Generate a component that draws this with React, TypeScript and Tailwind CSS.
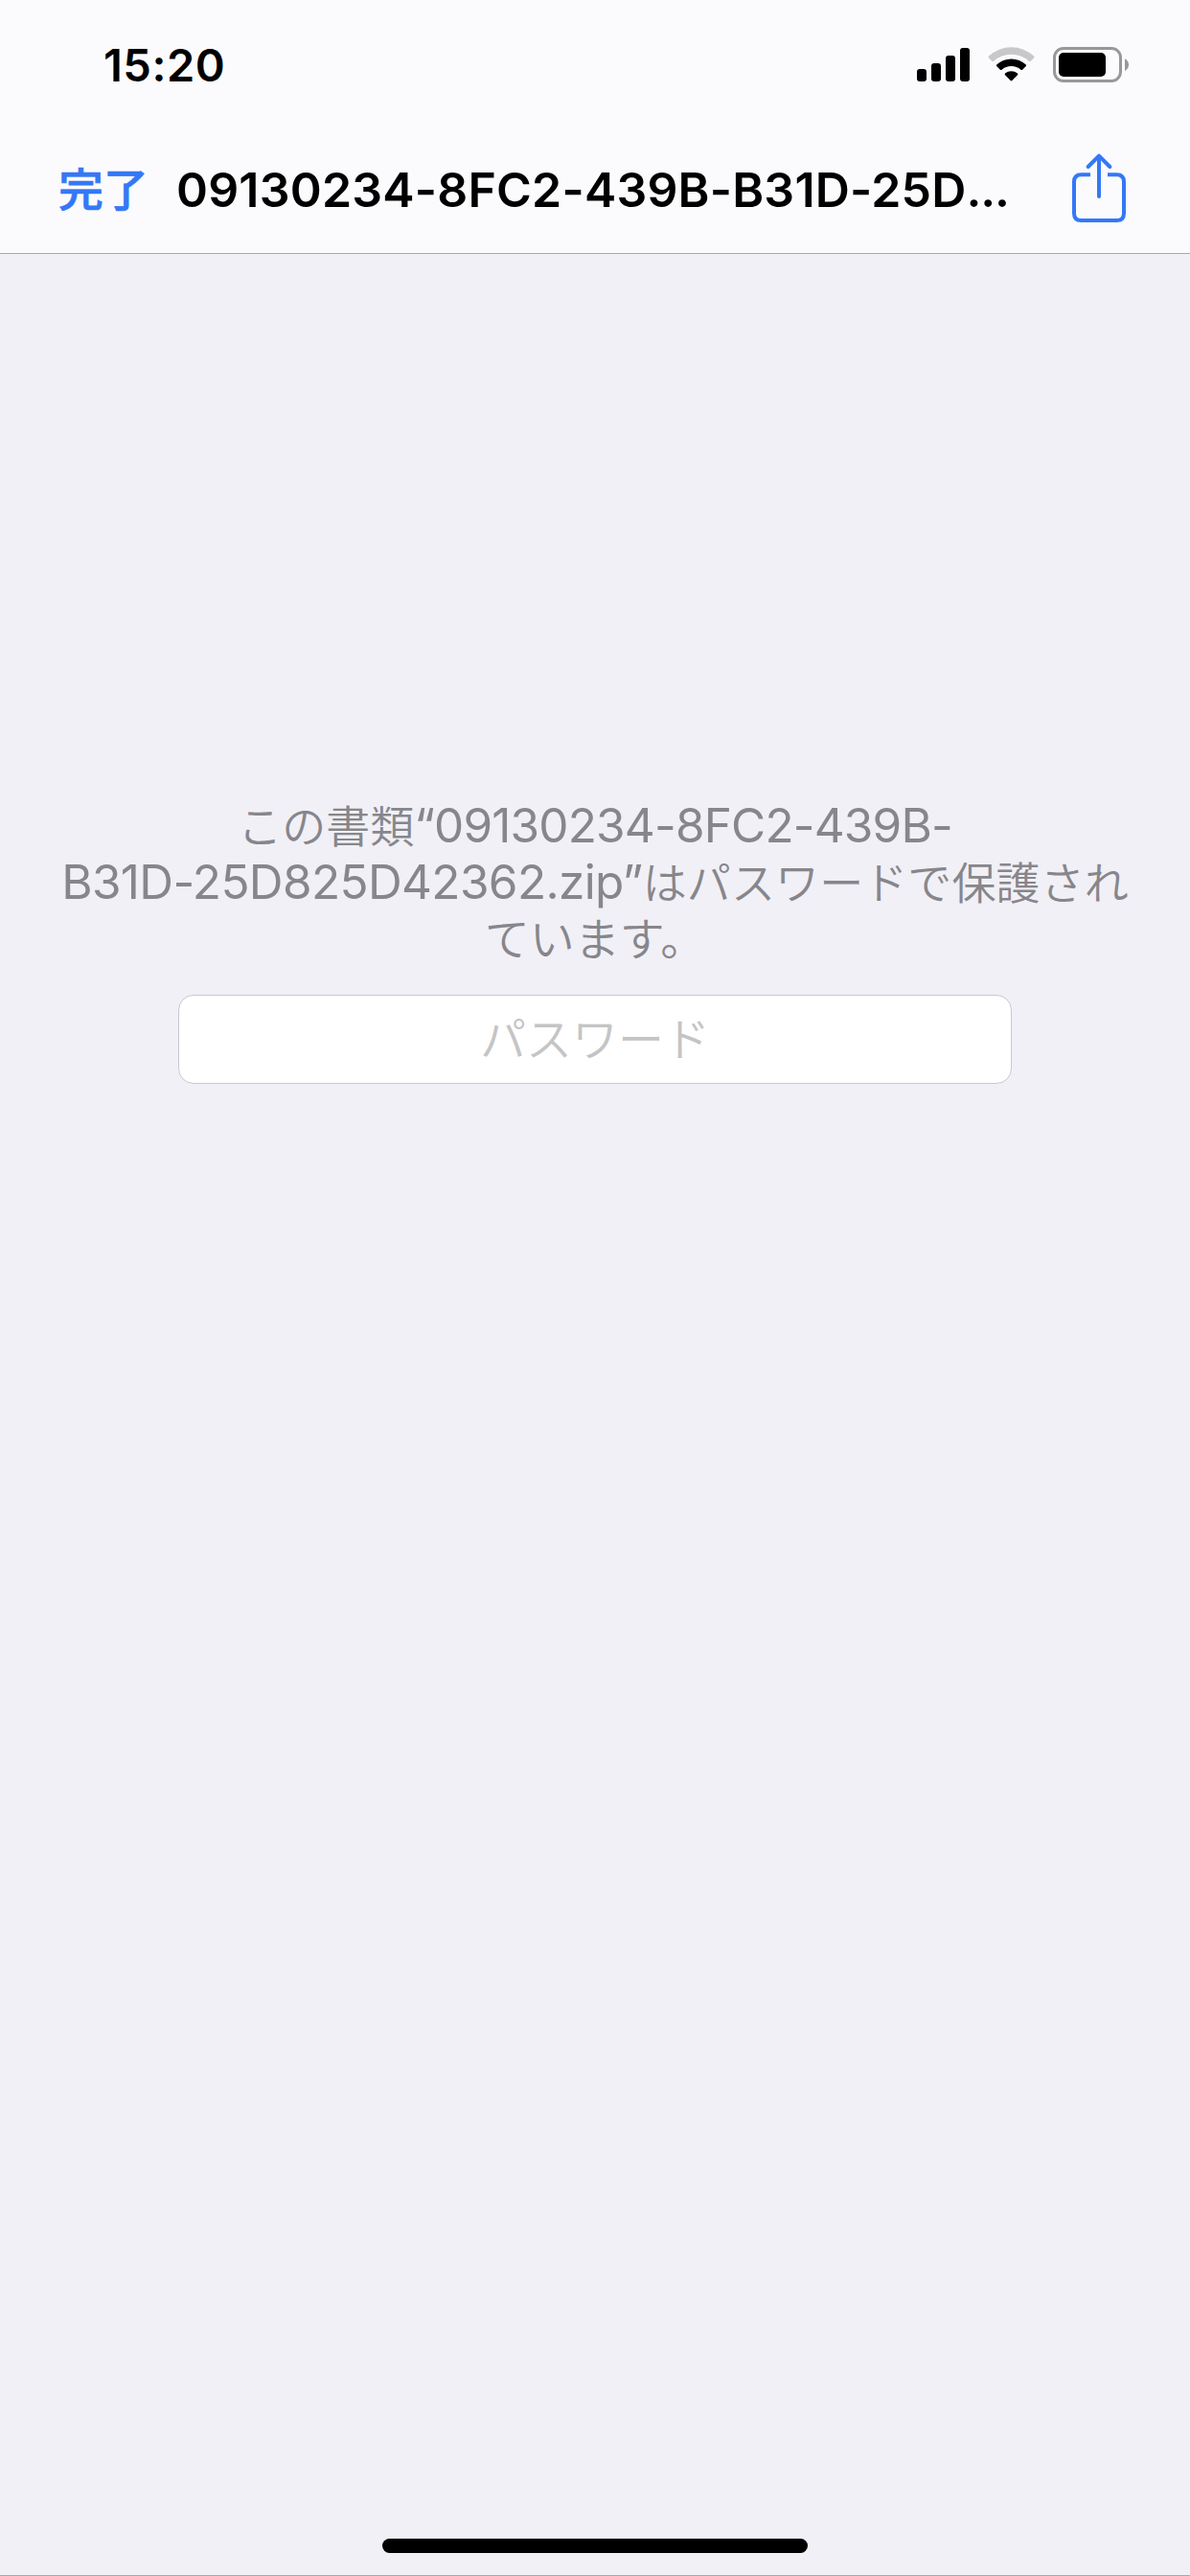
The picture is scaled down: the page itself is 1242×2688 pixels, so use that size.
function SignalIcon() {
  return (
    <svg className="h-[36px] w-[56px]" viewBox="0 0 56 36" fill="#000">
      <rect x="0" y="22" width="10" height="13" rx="3" />
      <rect x="15" y="16" width="10" height="19" rx="3" />
      <rect x="30" y="8" width="10" height="27" rx="3" />
      <rect x="45" y="0" width="10" height="35" rx="3" />
    </svg>
  );
}

function WifiIcon() {
  return (
    <svg className="ml-[18px] h-[38px] w-[49px]" viewBox="0 0 49 38">
      <path
        d="M1 9.6Q.1 10.6 1 11.5L4.2 14.8Q5.2 15.6 6.2 14.8A27.3 27.3 0 0 1 42.8 14.8Q43.8 15.6 44.8 14.8L48 11.5Q48.9 10.6 48 9.6A34.5 34.5 0 0 0 1 9.6Z"
        fill="#c8c8cb"
      />
      <path
        d="M9.2 18.4Q8.5 19.2 9.2 20L12.8 23.7Q13.7 24.4 14.6 23.7A15.4 15.4 0 0 1 34.4 23.7Q35.3 24.4 36.2 23.7L39.8 20Q40.5 19.2 39.8 18.4A22.6 22.6 0 0 0 9.2 18.4Z"
        fill="#000"
      />
      <path
        d="M18 27.6Q17.2 28.5 18 29.3L23.7 35Q24.5 35.8 25.3 35L31 29.3Q31.8 28.5 31 27.6A10.3 10.3 0 0 0 18 27.6Z"
        fill="#000"
      />
    </svg>
  );
}

function BatteryIcon() {
  return (
    <svg className="ml-[19px] h-[38px] w-[79px]" viewBox="0 0 79 38">
      <rect x="1.5" y="1.5" width="69" height="34" rx="9.5" fill="none" stroke="#98989b" strokeWidth="3" />
      <rect x="6" y="6" width="49" height="25" rx="5" fill="#000" />
      <path d="M75 12.2Q79 14.5 79 18.6T75 25Z" fill="#98989b" />
    </svg>
  );
}

function ShareIcon() {
  return (
    <svg
      className="h-[76px] w-[56px]"
      viewBox="0 0 56 76"
      fill="none"
      stroke="#3478f6"
      strokeWidth="4"
    >
      <path d="M19 22.2H9.5Q2 22.2 2 29.7V62.5Q2 70 9.5 70H46.5Q54 70 54 62.5V29.7Q54 22.2 46.5 22.2H37" />
      <path d="M28 3V45M16.7 14L28 2.6L39.3 14" strokeLinecap="round" strokeLinejoin="round" />
    </svg>
  );
}

export default function App() {
  return (
    <div className="flex h-[2688px] w-[1242px] flex-col overflow-hidden border-b border-[#a9a9ad] bg-[#f1f0f6] font-['Inter','Noto_Sans_CJK_JP',sans-serif]">
      <header className="h-[265px] shrink-0 border-b border-[#a9a9ad] bg-[#fbfbfd]">
        <div className="flex h-[132px] items-center pt-[4px] pr-[64px] pl-[108px]">
          <span className="pb-[2px] text-[47px] leading-none font-semibold tracking-[0.5px] text-black">15:20</span>
          <div className="ml-auto flex items-center">
            <SignalIcon />
            <WifiIcon />
            <BatteryIcon />
          </div>
        </div>
        <nav className="flex h-[132px] items-center pr-[67px] pl-[61px]">
          <button className="pb-[1px] text-[47px] leading-none font-medium whitespace-nowrap text-[#3478f6] [-webkit-text-stroke:0.7px_#3478f6]">
            完了
          </button>
          <h1 className="ml-[29px] text-[50px] leading-none font-semibold tracking-[0.2px] whitespace-nowrap text-black">
            09130234-8FC2-439B-B31D-25D<span className="tracking-[-1.2px]">...</span>
          </h1>
          <button className="ml-auto">
            <ShareIcon />
          </button>
        </nav>
      </header>

      <main className="flex flex-1 flex-col items-center pt-[567px]">
        <p className="text-center text-[49.5px] leading-[59px] whitespace-nowrap text-[#87868b]">
          <span className="text-[46px] leading-none font-[350]">この書類</span>
          <span className="tracking-[-0.84px]">“09130234-8FC2-439B-</span>
          <br />
          <span className="tracking-[-0.64px]">B31D-25D825D42362.zip”</span>
          <span className="text-[46px] leading-none font-[350] tracking-[0.1px]">はパスワードで保護され</span>
          <br />
          <span className="text-[47px] leading-none font-[350]">ています。</span>
        </p>
        <input
          type="password"
          placeholder="パスワード"
          className="mt-[29px] h-[93px] w-[870px] rounded-[16px] border border-[#c9c9cc] bg-white text-center text-[48px] leading-[60px] font-[350] placeholder:text-[#c4c4c6]"
        />
      </main>

      <div className="mb-[23px] h-[15px] w-[444px] self-center rounded-full bg-black" />
    </div>
  );
}
